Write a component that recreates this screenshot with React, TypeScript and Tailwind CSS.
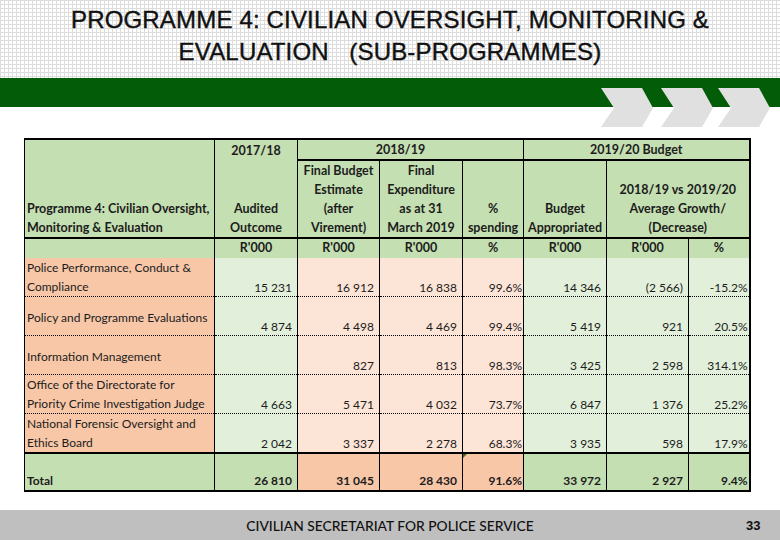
const cols = [190, 83, 82, 83, 61, 83, 82, 61];

const rows = [
  { label: ['Police Performance, Conduct &', 'Compliance'], h: 'h-[38px]', vals: ['15 231', '16 912', '16 838', '99.6%', '14 346', '(2 566)', '-15.2%'] },
  { label: ['Policy and Programme Evaluations'], h: 'h-[39px]', vals: ['4 874', '4 498', '4 469', '99.4%', '5 419', '921', '20.5%'] },
  { label: ['Information Management'], h: 'h-[39px]', vals: ['', '827', '813', '98.3%', '3 425', '2 598', '314.1%'] },
  { label: ['Office of the Directorate for', 'Priority Crime Investigation Judge'], h: 'h-[39px]', vals: ['4 663', '5 471', '4 032', '73.7%', '6 847', '1 376', '25.2%'] },
  { label: ['National Forensic Oversight and', 'Ethics Board'], h: 'h-[39px]', vals: ['2 042', '3 337', '2 278', '68.3%', '3 935', '598', '17.9%'] },
];

const total = ['26 810', '31 045', '28 430', '91.6%', '33 972', '2 927', '9.4%'];
const green = 'bg-[#c4dfb2]';

// audited outcome and the 2019/20 columns are green, the 2018/19 ones orange
const bodyBg = (i: number) => (i === 0 || i >= 4 ? 'bg-[#e2efda]' : 'bg-[#fce4d6]');
const totalBg = (i: number) => (i === 0 || i >= 4 ? green : 'bg-[#f7c7a8]');

function Chevron({ className = '' }: { className?: string }) {
  return (
    <svg className={className} width="52" height="40" viewBox="0 0 52 40">
      <polygon points="0,0 41,0 52,20 41,39 0,39 13,20" fill="#e0e0e0" />
    </svg>
  );
}

function HeaderCell({ children, className = '', colSpan }: { children?: React.ReactNode; className?: string; colSpan?: number }) {
  return (
    <td colSpan={colSpan} className={`border-r border-black ${green} p-0 text-center align-bottom text-[12.5px] font-bold leading-[19px] ${className}`}>
      {children}
    </td>
  );
}

export default function App() {
  return (
    <div className="flex h-[540px] w-[780px] flex-col overflow-hidden bg-white text-black">
      <header className="h-[78px] bg-white bg-[linear-gradient(#dcdcdc_1px,transparent_1px),linear-gradient(90deg,#dcdcdc_1px,transparent_1px)] bg-[size:4px_4px] pt-[4px] text-center font-['Liberation_Sans',sans-serif] text-[24px] leading-[32px] tracking-[0.17px] text-[#111] [-webkit-text-stroke:0.4px_#111]">
        <h1>PROGRAMME 4: CIVILIAN OVERSIGHT, MONITORING &amp;</h1>
        <h1 className="whitespace-pre">EVALUATION   (SUB-PROGRAMMES)</h1>
      </header>

      <div className="relative h-[29px] bg-[#035c07]">
        <div className="absolute left-[601px] top-[10px] flex">
          <Chevron />
          <Chevron className="ml-[8px]" />
          <Chevron className="ml-[5px]" />
        </div>
      </div>

      <main className="flex-1 pl-[24px] pt-[31px]">
        <table className="table-fixed border-collapse border-y-2 border-l border-r-2 border-black font-['Lato',sans-serif] text-[12px] text-[#1c1c1c]" style={{ width: 725 }}>
          <colgroup>
            {cols.map((w, i) => (
              <col key={i} style={{ width: w }} />
            ))}
          </colgroup>
          <tbody>
            <tr className="h-[19px]">
              <HeaderCell />
              <HeaderCell className="align-middle">2017/18</HeaderCell>
              <HeaderCell colSpan={3} className="border-b-2 pr-[20px] align-middle">
                2018/19
              </HeaderCell>
              <HeaderCell colSpan={3} className="border-b-2 border-r-0 align-middle">
                2019/20 Budget
              </HeaderCell>
            </tr>
            <tr className="h-[78px] border-b-2 border-black">
              <HeaderCell className="whitespace-nowrap px-[2px] text-left">
                Programme 4: Civilian Oversight,
                <br />
                Monitoring &amp; Evaluation
              </HeaderCell>
              <HeaderCell>
                Audited
                <br />
                Outcome
              </HeaderCell>
              <HeaderCell>
                Final Budget
                <br />
                Estimate
                <br />
                (after
                <br />
                Virement)
              </HeaderCell>
              <HeaderCell>
                Final
                <br />
                Expenditure
                <br />
                as at 31
                <br />
                March 2019
              </HeaderCell>
              <HeaderCell>
                %
                <br />
                spending
              </HeaderCell>
              <HeaderCell className="whitespace-nowrap">
                Budget
                <br />
                Appropriated
              </HeaderCell>
              <HeaderCell colSpan={2} className="border-r-0">
                2018/19 vs 2019/20
                <br />
                Average Growth/
                <br />
                (Decrease)
              </HeaderCell>
            </tr>
            <tr className="h-[20px]">
              <HeaderCell />
              {["R'000", "R'000", "R'000", '%', "R'000", "R'000"].map((t, i) => (
                <HeaderCell key={i} className="pb-[2px] align-middle !leading-[17px]">
                  {t}
                </HeaderCell>
              ))}
              <HeaderCell className="border-r-0 pb-[2px] align-middle !leading-[17px]">%</HeaderCell>
            </tr>
            {rows.map((row, r) => (
              <tr key={r} className={`${row.h} ${r < rows.length - 1 ? 'border-b border-dotted border-black' : 'border-b-2 border-black'}`}>
                <td className={`border-r border-black bg-[#f7c7a8] px-[2px] py-0 ${row.label.length === 1 ? 'pt-[2px] align-middle' : 'align-bottom'} whitespace-nowrap leading-[19px]`}>
                  {row.label.map((l) => (
                    <div key={l}>{l}</div>
                  ))}
                </td>
                {row.vals.map((v, i) => (
                  <td key={i} className={`${i < 6 ? 'border-r border-black' : ''} ${bodyBg(i)} ${i === 3 || i === 6 ? 'pr-[1px]' : 'pr-[5px]'} py-0 text-right align-bottom leading-[16px]`}>
                    {v}
                  </td>
                ))}
              </tr>
            ))}
            <tr className="h-[38px] font-bold">
              <td className={`border-r border-black ${green} px-[2px] py-0 align-bottom`}>Total</td>
              {total.map((v, i) => (
                <td key={i} className={`relative ${i < 6 ? 'border-r border-black' : ''} ${totalBg(i)} ${i === 3 || i === 6 ? 'pr-[1px]' : 'pr-[5px]'} py-0 text-right align-bottom`}>
                  {i === 3 && <span className="absolute left-0 top-0 h-0 w-0 border-r-[4px] border-t-[4px] border-r-transparent border-t-[#3f6b1f]" />}
                  {v}
                </td>
              ))}
            </tr>
          </tbody>
        </table>
      </main>

      <footer className="relative flex h-[30px] items-center justify-center bg-[#bfbfbf] pt-[3px] font-['Lato',sans-serif] text-[13.8px] font-medium text-[#111]">
        CIVILIAN SECRETARIAT FOR POLICE SERVICE
        <span className="absolute left-[746px] top-[6px] font-['Liberation_Sans',sans-serif] text-[13px] font-bold">33</span>
      </footer>
    </div>
  );
}
